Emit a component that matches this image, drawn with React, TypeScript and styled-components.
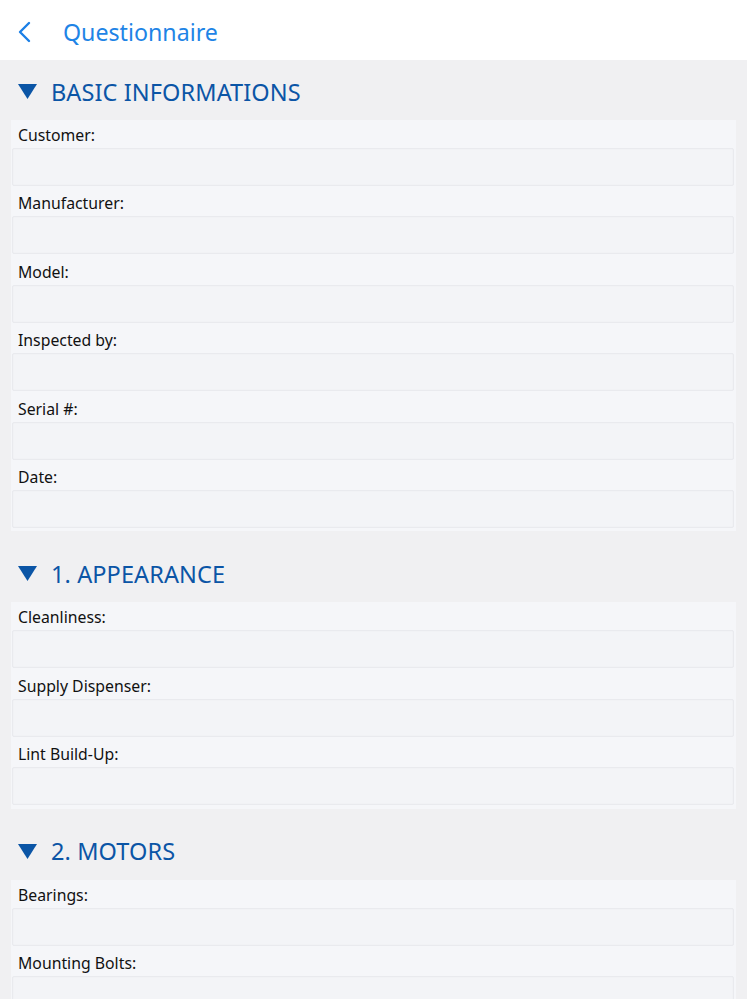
import React from 'react'
import styled, { createGlobalStyle } from 'styled-components'

type Section = {
  title: string;
  fields: string[];
}

const sections: Section[] = [
  {
    title: 'BASIC INFORMATIONS',
    fields: ['Customer:', 'Manufacturer:', 'Model:', 'Inspected by:', 'Serial #:', 'Date:'],
  },
  {
    title: '1. APPEARANCE',
    fields: ['Cleanliness:', 'Supply Dispenser:', 'Lint Build-Up:'],
  },
  {
    title: '2. MOTORS',
    fields: ['Bearings:', 'Mounting Bolts:'],
  },
]

const GlobalStyle = createGlobalStyle`
  html, body { margin: 0; padding: 0; background: #f0f0f2; }
  body { font-family: "Noto Sans", "Open Sans", sans-serif; overflow: hidden; }
`

const App: React.FC = () => {
  return (
    <ScPage>
      <GlobalStyle />
      <ScHeader>
        <ScBack aria-label='back'>
          <svg width='13' height='22' viewBox='0 0 13 22'>
            <path d='M11 2 L2 11 L11 20' fill='none' stroke='#1b7fe6' strokeWidth='2.4' strokeLinecap='round' strokeLinejoin='round' />
          </svg>
        </ScBack>
        <h1>Questionnaire</h1>
      </ScHeader>

      <ScBody>
        {sections.map(section => (
          <ScSection key={section.title}>
            <ScSectionTitle>
              <svg width='19' height='15' viewBox='0 0 19 15'>
                <path d='M0 0 H19 L9.5 15 Z' fill='#0b55a6' />
              </svg>
              <span>{section.title}</span>
            </ScSectionTitle>
            <ScCard>
              {section.fields.map(field => (
                <ScField key={field}>
                  <label>{field}</label>
                  <ScInput />
                </ScField>
              ))}
            </ScCard>
          </ScSection>
        ))}
      </ScBody>
    </ScPage>
  )
}

const ScPage = styled.div`
  width: 747px;
  height: 999px;
  overflow: hidden;
  background: #f0f0f2;
`

const ScHeader = styled.header`
  display: flex;
  align-items: center;
  height: 60px;
  padding-left: 18px;
  padding-top: 4px;
  box-sizing: border-box;
  background: #fff;

  h1 {
    margin: 0 0 0 32px;
    font-size: 23.2px;
    font-weight: 400;
    color: #1e84e6;
  }
`

const ScBack = styled.span`
  display: flex;
  align-items: center;
  margin-top: 0;
`

const ScBody = styled.main`
  display: flex;
  flex-direction: column;
  padding: 0 11px;
`

const ScSection = styled.section`
  display: flex;
  flex-direction: column;
  padding-top: 11px;

  &:first-child { padding-top: 0; }
`

const ScSectionTitle = styled.div`
  display: flex;
  align-items: center;
  gap: 14px;
  height: 60px;
  padding-left: 7px;
  padding-top: 3px;
  box-sizing: border-box;

  span {
    font-size: 23.5px;
    color: #0b55a6;
    letter-spacing: 0.1px;
  }
`

const ScCard = styled.div`
  display: flex;
  flex-direction: column;
  background: #f5f6f9;
  padding-bottom: 1px;
`

const ScField = styled.div`
  display: flex;
  flex-direction: column;
  margin-bottom: 2.4px;

  label {
    height: 28px;
    line-height: 31px;
    padding-left: 7px;
    font-size: 15.8px;
    color: #111;
  }
`

const ScInput = styled.div`
  height: 38px;
  margin: 0 2px 0 1px;
  box-sizing: border-box;
  border: 1px solid #e9eaee;
  border-radius: 2px;
  background: #f3f4f7;
  box-shadow: inset 0 0 2px rgba(0, 0, 0, 0.03);
`

export default App
